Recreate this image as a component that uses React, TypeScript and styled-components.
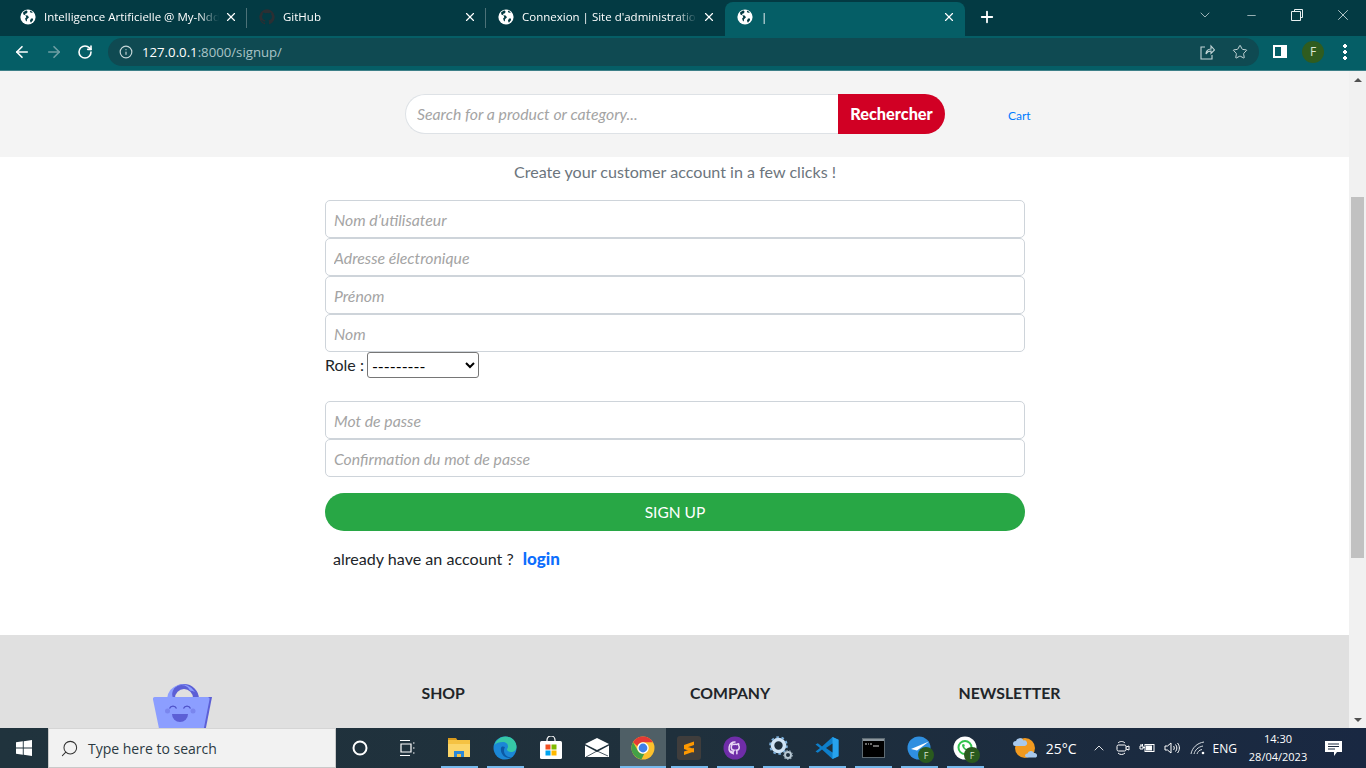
import styled, { createGlobalStyle } from 'styled-components';
import {
  ArrowLeft,
  ArrowRight,
  RotateCw,
  Info,
  Star,
  X,
  Plus,
  Minus,
  ChevronDown,
  ChevronUp,
  Search,
} from 'lucide-react';

const GlobalStyle = createGlobalStyle`
  html, body {
    margin: 0;
    padding: 0;
    height: 100%;
    overflow: hidden;
    font-family: Lato, "Liberation Sans", sans-serif;
  }
  * { box-sizing: border-box; }
`;

const Screen = styled.div`
  width: 1366px;
  height: 768px;
  display: flex;
  flex-direction: column;
  overflow: hidden;
`;

/* browser chrome */
const TabStrip = styled.div`
  height: 36px;
  flex: none;
  background: #033a43;
  display: flex;
  align-items: flex-end;
  padding-left: 8px;
  color: #fff;
  font-family: "Open Sans", sans-serif;
  font-size: 11.5px;
`;

const Tab = styled.div<{ $active?: boolean; $width?: number }>`
  width: ${p => p.$width ?? 239}px;
  height: 34px;
  margin-top: 2px;
  display: flex;
  align-items: center;
  padding: 0 8px 5px 12px;
  position: relative;
  border-radius: 8px 8px 0 0;
  background: ${p => (p.$active ? '#055e66' : 'transparent')};
`;

const TabDivider = styled.span`
  position: absolute;
  right: 0;
  top: 6px;
  height: 20px;
  width: 1px;
  background: #4d7278;
`;

const TabTitle = styled.span`
  flex: 1;
  margin-left: 8px;
  white-space: nowrap;
  overflow: hidden;
  -webkit-mask-image: linear-gradient(to right, #000 88%, transparent 100%);
  mask-image: linear-gradient(to right, #000 88%, transparent 100%);
`;

const TabClose = styled(X).attrs({ size: 14, strokeWidth: 2 })`
  flex: none;
  margin-left: 5px;
  margin-right: 1px;
`;

const NewTab = styled(Plus).attrs({ size: 18, strokeWidth: 2.4 })`
  margin: 0 0 10px 13px;
`;

const WindowControls = styled.div`
  margin-left: auto;
  height: 30px;
  align-self: flex-start;
  display: flex;
  align-items: center;
  color: #e8f0f1;
`;

const WindowButton = styled.div`
  width: 46px;
  height: 30px;
  display: flex;
  align-items: center;
  justify-content: center;
`;

const Toolbar = styled.div`
  height: 34px;
  flex: none;
  background: #055e66;
  display: flex;
  align-items: center;
  padding: 0 0 3px 13px;
  color: #fff;
`;

const NavButton = styled.div<{ $dim?: boolean }>`
  width: 32px;
  display: flex;
  justify-content: flex-start;
  color: ${p => (p.$dim ? '#6f9fa4' : '#fff')};
`;

const Omnibox = styled.div`
  width: 1151px;
  height: 28px;
  margin-left: -1px;
  background: #0f4a52;
  border-radius: 14px;
  display: flex;
  align-items: center;
  padding: 0 11px 0 11px;
  font-family: "Open Sans", sans-serif;
  font-size: 13.2px;
`;

const Url = styled.span`
  margin-left: 9px;
  color: #fff;
  em {
    font-style: normal;
    color: #a9c4c7;
  }
`;

const OmniboxActions = styled.div`
  margin-left: auto;
  display: flex;
  align-items: center;
  gap: 17px;
  color: #c5d6d8;
`;

const Avatar = styled.div<{ $size: number; $font: number }>`
  width: ${p => p.$size}px;
  height: ${p => p.$size}px;
  border-radius: 50%;
  background: #2f5c1f;
  color: #dbe7d3;
  display: flex;
  align-items: center;
  justify-content: center;
  font-family: "Open Sans", sans-serif;
  font-size: ${p => p.$font}px;
`;

const ToolbarEnd = styled.div`
  display: flex;
  align-items: center;
  margin-left: 14px;
  gap: 15px;
`;

const MenuDots = styled.div`
  width: 4px;
  height: 16px;
  margin-left: 4px;
  background: radial-gradient(circle 1.8px at 2px 2px, #fff 98%, transparent) 0 0 / 4px 6px repeat-y;
`;

const ChromeRule = styled.div`
  height: 1px;
  flex: none;
  background: #3d8088;
`;

/* page */
const Viewport = styled.div`
  flex: 1;
  min-height: 0;
  display: flex;
`;

const Page = styled.div`
  flex: 1;
  min-width: 0;
  overflow: hidden;
  background: #fff;
`;

const Header = styled.header`
  height: 86px;
  background: #f4f4f4;
  padding: 23px 0 0 405px;
  display: flex;
  align-items: flex-start;
`;

const SearchForm = styled.form`
  display: flex;
  width: 540px;
  height: 40px;
`;

const SearchInput = styled.input`
  flex: 1;
  min-width: 0;
  border: 1px solid #dee2e6;
  border-right: 0;
  border-radius: 20px 0 0 20px;
  background: #fff;
  padding: 0 11px 1px;
  font: italic 15.8px Lato, sans-serif;
  &::placeholder { color: #a4a4a4; opacity: 1; }
`;

const SearchButton = styled.button`
  width: 107px;
  border: 0;
  padding: 0 0 1px;
  background: #d10024;
  color: #fff;
  border-radius: 0 20px 20px 0;
  font: 900 16.3px Lato, sans-serif;
`;

const CartLink = styled.a`
  margin: 14px 0 0 63px;
  font-size: 12px;
  line-height: 15px;
  color: #007bff;
`;

const Main = styled.main`
  width: 700px;
  margin-left: 325px;
  height: 478px;
  padding-top: 3px;
`;

const Lead = styled.p`
  margin: 0 0 16px;
  text-align: center;
  font-size: 16.1px;
  line-height: 24px;
  color: #6c757d;
`;

const Field = styled.input`
  display: block;
  width: 100%;
  height: 38px;
  border: 1px solid #ced4da;
  border-radius: 5px;
  background: #fff;
  padding: 0 8px;
  font: italic 15.8px Lato, sans-serif;
  &::placeholder { color: #a4a4a4; opacity: 1; }
`;

const RoleRow = styled.div`
  height: 49px;
  font-size: 16px;
  line-height: 26px;
  color: #212529;
  display: flex;
  align-items: flex-start;
`;

const RoleLabel = styled.label`
  margin-right: 3px;
`;

const RoleSelect = styled.select`
  width: 112px;
  height: 26px;
  font: 16px Lato, sans-serif;
  background: #fff;
  color: #000;
  border: 1px solid #767676;
  border-radius: 3px;
`;

const SignUp = styled.button`
  display: block;
  width: 100%;
  height: 38px;
  margin-top: 16px;
  border: 0;
  border-radius: 19px;
  background: #28a745;
  color: #fff;
  font: 15.5px Lato, sans-serif;
`;

const LoginLine = styled.p`
  margin: 16px 0 0 8px;
  font-size: 16.1px;
  line-height: 24px;
  color: #212529;
  a {
    margin-left: 5px;
    color: #0d6efd;
    font-size: 17px;
    font-weight: 900;
  }
`;

const Footer = styled.footer`
  background: #e0e0e0;
  padding: 48px 0 0 153px;
  height: 200px;
  display: grid;
  grid-template-columns: repeat(4, 268.5px);
  align-items: start;
`;

const FooterTitle = styled.h5`
  margin: 0;
  font-size: 15.8px;
  line-height: 20px;
  font-weight: 700;
  color: #212529;
`;

const BagLogo = styled.svg`
  display: block;
  width: 60px;
  height: 60px;
`;

const Scrollbar = styled.aside`
  width: 17px;
  flex: none;
  background: #f1f1f1;
  display: flex;
  flex-direction: column;
  align-items: center;
`;

const ScrollArrow = styled.div<{ $down?: boolean }>`
  height: 17px;
  flex: none;
  margin-top: ${p => (p.$down ? 'auto' : '0')};
  display: flex;
  align-items: center;
  justify-content: center;
  &::before {
    content: '';
    border-left: 4px solid transparent;
    border-right: 4px solid transparent;
    ${p => (p.$down ? 'border-top: 4px solid #505050;' : 'border-bottom: 4px solid #505050;')}
  }
`;

const ScrollThumb = styled.div`
  width: 13px;
  height: 361px;
  margin-top: 109px;
  background: #c1c1c1;
`;

/* windows taskbar */
const Taskbar = styled.div`
  height: 40px;
  flex: none;
  background: linear-gradient(to right, #20333d, #1f303c 50%, #192842);
  display: flex;
  align-items: center;
  color: #fff;
  font-family: "Open Sans", sans-serif;
`;

const StartButton = styled.div`
  width: 48px;
  height: 40px;
  flex: none;
  display: flex;
  align-items: center;
  justify-content: center;
`;

const SearchBox = styled.div`
  width: 288px;
  height: 40px;
  flex: none;
  background: #f2f2f2;
  border: 1px solid #c9c9c9;
  border-top-color: #d5d5d5;
  display: flex;
  align-items: center;
  padding-left: 11px;
  color: #333;
  font-size: 14px;
`;

const SearchLabel = styled.span`
  margin-left: 9px;
  color: #2b3a42;
`;

const Slots = styled.div`
  display: flex;
  height: 40px;
  margin-left: 6px;
`;

const PlainSlot = styled.div`
  width: 47px;
  height: 40px;
  display: flex;
  align-items: center;
  justify-content: center;
`;

const Slot = styled.div<{ $active?: boolean; $running?: boolean }>`
  width: 46px;
  height: 40px;
  display: flex;
  align-items: center;
  justify-content: center;
  position: relative;
  background: ${p => (p.$active ? '#4f5f66' : 'transparent')};
  &::after {
    content: '';
    display: ${p => (p.$running ? 'block' : 'none')};
    position: absolute;
    bottom: 0;
    left: ${p => (p.$active ? '0' : '4.5px')};
    right: ${p => (p.$active ? '0' : '4.5px')};
    height: 2px;
    background: #76b9ed;
  }
`;

const Badge = styled(Avatar)`
  position: absolute;
  right: 8px;
  bottom: 5px;
  background: #2a5a1e;
`;

const IconWrap = styled.div`
  position: relative;
  width: 46px;
  height: 40px;
  display: flex;
  align-items: center;
  justify-content: center;
`;

const Tray = styled.div`
  margin-left: auto;
  display: flex;
  align-items: center;
  height: 40px;
  padding-right: 16px;
  color: #fff;
  font-size: 12px;
`;

const Temp = styled.span`
  margin: 0 14px 0 8px;
  font-size: 14px;
`;

const TrayIcons = styled.div`
  display: flex;
  align-items: center;
  gap: 9px;
  margin-right: 7px;
`;

const Clock = styled.div`
  width: 74px;
  text-align: center;
  font-size: 11px;
  line-height: 18px;
  margin: 0 1px 0 4px;
`;

const Notify = styled.div`
  width: 34px;
  display: flex;
  justify-content: center;
`;

const Globe = () => (
  <svg width="16" height="16" viewBox="0 0 16 16" style={{ flex: 'none' }}>
    <circle cx="8" cy="8" r="7.6" fill="#fff" />
    <path
      d="M6.2 1.2 3 3.4l.4 2 2.3 1.1.6 1.7-1.2 1.2.7 2.4 1 .8.2-2.4 2-2-1.4-1.8-2-.2-.7-1.1 1.9-.9.9-1.5zM11 9.6l-1.1 2.2 1 1.9 2.2-2.6-.2-1.5zM10.4 1.4l-.6 1.5 1.4.9 1.8-.4z"
      fill="#033a43"
    />
  </svg>
);

const GitHubMark = ({ color, size }: { color: string; size: number }) => (
  <svg width={size} height={size} viewBox="0 0 24 24" fill={color} style={{ flex: 'none' }}>
    <path d="M12 .5a11.5 11.5 0 0 0-3.64 22.41c.58.1.79-.25.79-.56v-2c-3.2.7-3.88-1.54-3.88-1.54-.52-1.33-1.28-1.69-1.28-1.69-1.05-.71.08-.7.08-.7 1.15.08 1.76 1.19 1.76 1.19 1.03 1.76 2.7 1.25 3.36.96.1-.75.4-1.25.73-1.54-2.55-.29-5.24-1.28-5.24-5.69 0-1.26.45-2.28 1.19-3.09-.12-.29-.52-1.46.11-3.05 0 0 .97-.31 3.16 1.18a11 11 0 0 1 5.76 0c2.19-1.49 3.16-1.18 3.16-1.18.63 1.59.23 2.76.11 3.05.74.81 1.19 1.83 1.19 3.09 0 4.42-2.69 5.39-5.25 5.68.41.36.78 1.06.78 2.14v3.17c0 .31.21.67.8.56A11.5 11.5 0 0 0 12 .5z" />
  </svg>
);

const ChromeIcon = () => (
  <svg width="24" height="24" viewBox="0 0 48 48">
    <circle cx="24" cy="24" r="23" fill="#fbc02d" />
    <path d="M24 1a23 23 0 0 1 19.9 11.5H24a11.5 11.5 0 0 0-11 8.2L4.1 12.5A23 23 0 0 1 24 1z" fill="#e53935" />
    <path d="M4.1 12.5 14 29.8a11.5 11.5 0 0 0 12.8 5.4L20.8 46.8A23 23 0 0 1 4.1 12.5z" fill="#43a047" />
    <circle cx="24" cy="24" r="11.5" fill="#fff" />
    <circle cx="24" cy="24" r="8.8" fill="#3f80e8" />
  </svg>
);

const FolderIcon = () => (
  <svg width="24" height="22" viewBox="0 0 24 22">
    <path d="M1 1h8l2 3H1z" fill="#d99a1c" />
    <rect x="1" y="3" width="22" height="17" fill="#f5c242" />
    <rect x="1" y="7" width="22" height="13" fill="#fbd568" />
    <path d="M7 20v-6h10v6h-3v-3h-4v3z" fill="#2b88d8" />
    <rect x="10" y="17" width="4" height="3" fill="#f5c242" />
  </svg>
);

const EdgeIcon = () => (
  <svg width="24" height="24" viewBox="0 0 24 24">
    <circle cx="12" cy="12" r="11.5" fill="#1b87d6" />
    <path d="M1.5 9C3 3.5 8 .5 12.5.5 18.5.5 23.5 5 23.5 11c0 3-2.5 5-5.5 5-2 0-4-1-4-2.5 0-1 1-1.5 1-3C15 7.5 12.5 6 10 6 6 6 3 7 1.5 9z" fill="#36c7a6" />
    <path d="M8 12c-1 5 3 10 8 10 1 0 2-.3 3-1-5 1-8-3-8-6 0-2 .5-3 1-4-2-1-4-.5-4 1z" fill="#0c59a4" />
  </svg>
);

const StoreIcon = () => (
  <svg width="24" height="24" viewBox="0 0 24 24">
    <path d="M8 6V4a4 4 0 0 1 8 0v2" fill="none" stroke="#fff" strokeWidth="1.2" />
    <rect x="1" y="5" width="22" height="18" rx="1.5" fill="#fff" />
    <rect x="6.5" y="8.5" width="5" height="5" fill="#f25022" />
    <rect x="12.5" y="8.5" width="5" height="5" fill="#7fba00" />
    <rect x="6.5" y="14.5" width="5" height="5" fill="#00a4ef" />
    <rect x="12.5" y="14.5" width="5" height="5" fill="#ffb900" />
  </svg>
);

const MailIcon = () => (
  <svg width="24" height="20" viewBox="0 0 24 20">
    <path d="M0 6 12 0l12 6-12 6z" fill="#fff" />
    <path d="M0 7.5 12 14l12-6.5V19H0z" fill="#fff" />
    <path d="M1 19 12 13l11 5" fill="none" stroke="#1f303c" strokeWidth=".8" />
  </svg>
);

const SublimeIcon = () => (
  <svg width="24" height="24" viewBox="0 0 24 24">
    <rect width="24" height="24" rx="3" fill="#3f3d3c" />
    <path d="M7 9 17 5.500v3.500L7 12.500zM7 9.500 17 13v3.500L7 13zM7 15.500 17 12v3.500L7 19z" fill="#ff9800" />
  </svg>
);

const GitHubDesktopIcon = () => (
  <svg width="24" height="24" viewBox="0 0 24 24">
    <circle cx="12" cy="12" r="11.5" fill="#6f2da8" />
    <g transform="translate(4.5 4.5) scale(.625)">
      <path
        d="M12 2.5a9.5 9.5 0 0 0-3 18.5v-2.6c-2.7.6-3.2-1.2-3.2-1.2M15 21v-3.4c0-1-.3-1.6-.7-2 2.4-.3 4.5-1.3 4.5-5 0-1-.4-1.900-1-2.600.1-.3.4-1.300-.1-2.600 0 0-.9-.3-2.800 1a9.600 9.600 0 0 0-5 0C8 5.100 7.100 5.400 7.100 5.400c-.5 1.300-.2 2.300-.1 2.600-.6.7-1 1.600-1 2.600 0 3.700 2.100 4.700 4.500 5-.3.3-.6.8-.7 1.500"
        fill="none"
        stroke="#e9d8f5"
        strokeWidth="2.4"
        strokeLinecap="round"
      />
    </g>
  </svg>
);

const GearsIcon = () => (
  <svg width="24" height="24" viewBox="0 0 24 24">
    <circle cx="9.500" cy="9.500" r="6" fill="none" stroke="#cfe3f5" strokeWidth="3.600" />
    <circle cx="9.500" cy="9.500" r="8.400" fill="none" stroke="#7fb2de" strokeWidth="1.800" strokeDasharray="2.600 2.700" />
    <circle cx="19" cy="19" r="3" fill="none" stroke="#b9c9d4" strokeWidth="2" />
    <circle cx="19" cy="19" r="4.300" fill="none" stroke="#8fa3b0" strokeWidth="1.200" strokeDasharray="1.500 1.500" />
  </svg>
);

const VsCodeIcon = () => (
  <svg width="24" height="24" viewBox="0 0 24 24">
    <path d="M17.500 1 23.500 3.800v16.400L17.500 23 7 13.500 2.800 16.800 .5 15.500 5 12 .5 8.500l2.300-1.300L7 10.500z" fill="#0e7fcb" />
    <path d="M17.500 1 23.500 3.800v16.400L17.500 23z" fill="#27a3ee" />
    <path d="M17.500 7.500 11 12l6.500 4.500z" fill="#1f303c" />
  </svg>
);

const TerminalIcon = () => (
  <svg width="23" height="20" viewBox="0 0 23 20">
    <rect x=".5" y=".5" width="22" height="19" fill="#000" stroke="#5e6b73" />
    <rect x="1" y="1" width="21" height="2" fill="#8d979e" />
    <path d="M3 6h2M6 6h1M8 6h2M11 8h6" stroke="#d6d6d6" strokeWidth="1.200" />
  </svg>
);

const TelegramIcon = () => (
  <svg width="24" height="24" viewBox="0 0 24 24">
    <circle cx="12" cy="12" r="11.500" fill="#2f8fe0" />
    <path d="M4 13 22 5.500 10 14.500z" fill="#fff" />
  </svg>
);

const WhatsappIcon = () => (
  <svg width="24" height="24" viewBox="0 0 24 24">
    <circle cx="12" cy="12" r="11.500" fill="#fff" />
    <circle cx="12" cy="11.500" r="6.500" fill="none" stroke="#31c24d" strokeWidth="2" />
    <path d="M9 8.500c0 3.500 3 6.500 6.500 6.500l.7-2-2-.8-.8.800c-1-.5-1.800-1.300-2.300-2.300l.8-.8-.8-2z" fill="#31c24d" />
  </svg>
);

const WeatherIcon = () => (
  <svg width="26" height="26" viewBox="0 0 26 26">
    <circle cx="13" cy="13" r="10" fill="#f29a1f" />
    <path d="M1 9a3 3 0 0 1 3-3 4 4 0 0 1 7.500-.5A2.800 2.800 0 0 1 13 11H3a2.200 2.200 0 0 1-2-2z" fill="#a9c9ec" />
    <path d="M13 21a2.500 2.500 0 0 1 2.500-2.500 3.500 3.500 0 0 1 6.500-.5 2.500 2.500 0 0 1 2 4.500H15a2.200 2.200 0 0 1-2-1.500z" fill="#a9c9ec" />
  </svg>
);

const StartLogo = () => (
  <svg width="16" height="16" viewBox="0 0 16 16" fill="#fff">
    <path d="M0 2.300 6.800 1.300v6.300H0zM7.700 1.200 16 0v7.600H7.700zM0 8.400h6.800v6.300L0 13.700zM7.700 8.400H16V16l-8.300-1.200z" />
  </svg>
);

export default function App() {
  const running = [true, true, false, false, true, true, true, true, true, true, true, true];
  const apps = [
    <FolderIcon />,
    <EdgeIcon />,
    <StoreIcon />,
    <MailIcon />,
    <ChromeIcon />,
    <SublimeIcon />,
    <GitHubDesktopIcon />,
    <GearsIcon />,
    <VsCodeIcon />,
    <TerminalIcon />,
    <TelegramIcon />,
    <WhatsappIcon />,
  ];

  return (
    <Screen>
      <GlobalStyle />
      <TabStrip>
        <Tab>
          <Globe />
          <TabTitle>Intelligence Artificielle @ My-Ndd</TabTitle>
          <TabClose />
          <TabDivider />
        </Tab>
        <Tab>
          <GitHubMark color="#2b2f33" size={16} />
          <TabTitle>GitHub</TabTitle>
          <TabClose />
          <TabDivider />
        </Tab>
        <Tab>
          <Globe />
          <TabTitle>Connexion | Site d'administration</TabTitle>
          <TabClose />
        </Tab>
        <Tab $active $width={240}>
          <Globe />
          <TabTitle>|</TabTitle>
          <TabClose />
        </Tab>
        <NewTab />
        <WindowControls>
          <WindowButton>
            <ChevronDown size={16} strokeWidth={1} />
          </WindowButton>
          <WindowButton>
            <Minus size={13} strokeWidth={1.2} />
          </WindowButton>
          <WindowButton>
            <svg width="12" height="12" viewBox="0 0 12 12" fill="none" stroke="currentColor">
              <path d="M3.500 2.500v-2h8v8h-2M.5 2.500h9v9h-9z" />
            </svg>
          </WindowButton>
          <WindowButton>
            <X size={18} strokeWidth={1} />
          </WindowButton>
        </WindowControls>
      </TabStrip>
      <Toolbar>
        <NavButton>
          <ArrowLeft size={18} strokeWidth={2.2} />
        </NavButton>
        <NavButton $dim>
          <ArrowRight size={18} strokeWidth={2.2} />
        </NavButton>
        <NavButton>
          <RotateCw size={16} strokeWidth={2.4} />
        </NavButton>
        <Omnibox>
          <Info size={14} color="#c5d6d8" />
          <Url>
            127.0.0.1<em>:8000/signup/</em>
          </Url>
          <OmniboxActions>
            <svg width="15" height="16" viewBox="0 0 15 16" fill="none" stroke="currentColor" strokeWidth="1.100">
              <path d="M5 3H1v12h11v-4M6 10c0-3 2-5 5-5V2l3.500 4L11 9.500V7C8.500 7 7 8 6 10z" />
            </svg>
            <Star size={16} strokeWidth={1.500} />
          </OmniboxActions>
        </Omnibox>
        <ToolbarEnd>
          <svg width="14" height="13" viewBox="0 0 14 13">
            <path fillRule="evenodd" d="M0 0h14v13H0zM2 2v9h6V2z" fill="#fff" />
          </svg>
          <Avatar $size={22} $font={12}>F</Avatar>
          <MenuDots />
        </ToolbarEnd>
      </Toolbar>
      <ChromeRule />
      <Viewport>
        <Page>
          <Header>
            <SearchForm>
              <SearchInput placeholder="Search for a product or category..." />
              <SearchButton type="button">Rechercher</SearchButton>
            </SearchForm>
            <CartLink>Cart</CartLink>
          </Header>
          <Main>
            <Lead>Create your customer account in a few clicks !</Lead>
            <Field placeholder="Nom d’utilisateur" />
            <Field placeholder="Adresse électronique" />
            <Field placeholder="Prénom" />
            <Field placeholder="Nom" />
            <RoleRow>
              <RoleLabel>Role :</RoleLabel>
              <RoleSelect>
                <option>---------</option>
              </RoleSelect>
            </RoleRow>
            <Field placeholder="Mot de passe" />
            <Field placeholder="Confirmation du mot de passe" />
            <SignUp type="button">SIGN UP</SignUp>
            <LoginLine>
              already have an account ? <a>login</a>
            </LoginLine>
          </Main>
          <Footer>
            <BagLogo viewBox="0 0 60 60">
              <path fillRule="evenodd" d="M16 16a15 15 0 0 1 30 0v2H40v-3a9 9 0 0 0-18 0v3h-6z" fill="#5c5fd6" />
              <path fillRule="evenodd" d="M14 16a15 15 0 0 1 28 -7a13 13 0 0 0-5-1.500A9 9 0 0 0 20 15v3h-6z" fill="#8c9eff" />
              <path d="M4 14h55l-9 46H10z" fill="#5c5fd6" />
              <path d="M1.500 14h53a2 2 0 0 1 2 2.500L48 60H9L0 16.500A2 2 0 0 1 1.500 14z" fill="#8c9eff" />
              <circle cx="14.500" cy="28" r="2.500" fill="#7a86ee" />
              <circle cx="40" cy="28" r="2.500" fill="#7a86ee" />
              <path d="M16.500 25.500a3.800 3.800 0 0 1 7 0M30.500 25.500a3.800 3.800 0 0 1 7 0" fill="none" stroke="#4f52c8" strokeWidth="1.300" />
              <path d="M19 31h16a8 8 0 0 1-16 0z" fill="#5c5fd6" />
            </BagLogo>
            <FooterTitle>SHOP</FooterTitle>
            <FooterTitle>COMPANY</FooterTitle>
            <FooterTitle>NEWSLETTER</FooterTitle>
          </Footer>
        </Page>
        <Scrollbar>
          <ScrollArrow />
          <ScrollThumb />
          <ScrollArrow $down />
        </Scrollbar>
      </Viewport>
      <Taskbar>
        <StartButton>
          <StartLogo />
        </StartButton>
        <SearchBox>
          <Search size={19} strokeWidth={1.300} style={{ transform: 'scaleX(-1)' }} />
          <SearchLabel>Type here to search</SearchLabel>
        </SearchBox>
        <PlainSlot>
          <svg width="16" height="16" viewBox="0 0 16 16" fill="none" stroke="#fff" strokeWidth="2">
            <circle cx="8" cy="8" r="6.500" />
          </svg>
        </PlainSlot>
        <PlainSlot>
          <svg width="16" height="16" viewBox="0 0 16 16" fill="none" stroke="#fff" strokeWidth="1.200">
            <path d="M1 .5h10M1 15.500h10M2 4h10v8H2zM14 3h1.500M14 8h1.500M14 13h1.500" />
          </svg>
        </PlainSlot>
        <Slots>
          {apps.map((icon, i) => (
            <Slot key={i} $running={running[i]} $active={i === 4}>
              <IconWrap>
                {icon}
                {i >= 10 && <Badge $size={16} $font={9}>F</Badge>}
              </IconWrap>
            </Slot>
          ))}
        </Slots>
        <Tray>
          <WeatherIcon />
          <Temp>25°C</Temp>
          <TrayIcons>
            <ChevronUp size={16} strokeWidth={1.300} />
            <svg width="14" height="16" viewBox="0 0 14 16" fill="none" stroke="#fff">
              <path d="M2 3c2-2 5-2 7 0M2 13c2 2 5 2 7 0" />
              <rect x="1" y="5" width="9" height="6" rx="1.500" />
              <path d="M10 7l3-1v4l-3-1" />
            </svg>
            <svg width="16" height="14" viewBox="0 0 16 14" fill="none" stroke="#fff">
              <path d="M1 5h3v3H1zM2 3v2M3.500 3v2M4 6.500h2" />
              <rect x="6" y="3.500" width="9" height="7" />
              <rect x="7" y="4.500" width="6" height="5" fill="#fff" stroke="none" />
            </svg>
            <svg width="17" height="16" viewBox="0 0 17 16" fill="none" stroke="#fff">
              <path d="M1 6h2.500L7 3v10L3.500 10H1zM9.500 6c1 1 1 3 0 4M11.500 4.500c1.800 2 1.800 5 0 7M13.500 3c2.500 3 2.500 7 0 10" />
            </svg>
            <svg width="16" height="14" viewBox="0 0 16 14" fill="none" stroke="#d5dbe0">
              <path d="M1 13C2 7 7 2 14 1M4 13c1-4 4-7 9-8M7 13c.6-2 2-4 5-4.500" />
              <circle cx="13" cy="12" r="1.300" fill="#fff" stroke="none" />
            </svg>
          </TrayIcons>
          <span>ENG</span>
          <Clock>
            14:30
            <br />
            28/04/2023
          </Clock>
          <Notify>
            <svg width="17" height="15" viewBox="0 0 17 15">
              <path d="M0 0h17v11h-5l-3 4v-4H0z" fill="#fff" />
              <path d="M3 3h11M3 5.500h11M3 8h7" stroke="#1b2a40" />
            </svg>
          </Notify>
        </Tray>
      </Taskbar>
    </Screen>
  );
}
